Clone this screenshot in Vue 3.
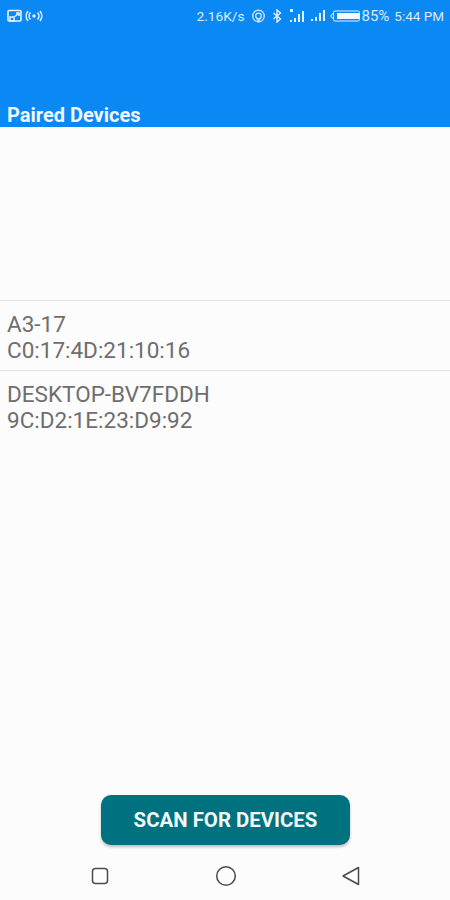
<script setup>
const devices = [
  { name: 'A3-17', mac: 'C0:17:4D:21:10:16' },
  { name: 'DESKTOP-BV7FDDH', mac: '9C:D2:1E:23:D9:92' },
]
</script>

<template>
  <div class="screen">
    <header class="appbar">
      <div class="status">
        <div class="status-left">
          <svg width="16" height="14" viewBox="0 0 16 14" fill="none" stroke="#e3f1ff" stroke-width="1.6">
            <rect x="1" y="1.5" width="13" height="10.5" rx="1"/>
            <path d="M9 4h3v3M12 4L8 7.5M3 8h4v4H3z"/>
          </svg>
          <svg width="18" height="14" viewBox="0 0 18 14" fill="none" stroke="#e3f1ff" stroke-width="1.6">
            <circle cx="9" cy="7" r="1.8" fill="#e3f1ff" stroke="none"/>
            <path d="M5.5 3.5a5 5 0 0 0 0 7M12.5 3.5a5 5 0 0 1 0 7M3 2a8 8 0 0 0 0 10M15 2a8 8 0 0 1 0 10"/>
          </svg>
        </div>
        <div class="status-right">
          <span class="speed">2.16K/s</span>
          <svg class="s-hot" width="15" height="14" viewBox="0 0 15 14" fill="none" stroke="#d5e9ff" stroke-width="1.3">
            <circle cx="7.5" cy="7" r="5.8"/>
            <circle cx="7.5" cy="7" r="2.8"/>
            <path d="M6 10l1.5 2.5L9 10"/>
          </svg>
          <svg class="s-bt" width="10" height="14" viewBox="0 0 10 14" fill="none" stroke="#e3f1ff" stroke-width="1.4">
            <path d="M1.5 4l7 6-3.5 3V1l3.5 3-7 6"/>
          </svg>
          <svg class="s-sig1" width="20" height="16" viewBox="0 0 20 16" fill="#e3f1ff">
            <rect x="2" y="1" width="3" height="3"/>
            <rect x="2" y="12" width="2" height="2"/>
            <rect x="6" y="10" width="2" height="4"/>
            <rect x="10" y="6" width="2" height="8"/>
            <rect x="14" y="3" width="2" height="11"/>
          </svg>
          <svg class="s-sig2" width="17" height="14" viewBox="0 0 17 14" fill="#e3f1ff">
            <rect x="1" y="10" width="2" height="2"/>
            <rect x="5" y="8" width="2" height="4"/>
            <rect x="9" y="4" width="2" height="8"/>
            <rect x="13" y="1" width="2" height="11"/>
          </svg>
          <svg class="s-bat" width="30" height="12" viewBox="0 0 30 12">
            <path d="M3 3.5L1 5v2l2 1.5" fill="none" stroke="#e3f1ff" stroke-width="1"/>
            <rect x="3.5" y="1" width="26" height="10" rx="1.5" fill="none" stroke="#e3f1ff" stroke-width="1"/>
            <rect x="7" y="3" width="22" height="6" fill="#f4f9ff"/>
          </svg>
          <span class="pct">85%</span>
          <span class="time">5:44 PM</span>
        </div>
      </div>
      <h1 class="title">Paired Devices</h1>
    </header>

    <main class="content">
      <ul class="list">
        <li v-for="d in devices" :key="d.mac" class="row">
          <div>{{ d.name }}</div>
          <div>{{ d.mac }}</div>
        </li>
      </ul>
    </main>

    <div class="action">
      <button class="scan" type="button">SCAN FOR DEVICES</button>
    </div>

    <nav class="navbar">
      <svg width="20" height="20" viewBox="0 0 20 20" fill="none" stroke="#4a4a4a" stroke-width="1.5">
        <rect x="2.5" y="2.5" width="15" height="15" rx="3"/>
      </svg>
      <svg width="22" height="22" viewBox="0 0 22 22" fill="none" stroke="#4a4a4a" stroke-width="1.5">
        <circle cx="11" cy="11" r="9.3"/>
      </svg>
      <svg width="20" height="20" viewBox="0 0 20 20" fill="none" stroke="#4a4a4a" stroke-width="1.5" stroke-linejoin="round">
        <path d="M17.5 1.5v17L2 10z"/>
      </svg>
    </nav>
  </div>
</template>

<style>
html, body { margin: 0; padding: 0; background: #fcfcfc; }
</style>

<style scoped>
.screen {
  width: 450px;
  height: 900px;
  display: flex;
  flex-direction: column;
  background: #fcfcfc;
  font-family: Roboto, "Liberation Sans", sans-serif;
  overflow: hidden;
}
.appbar {
  height: 127px;
  flex: none;
  background: #0a88f4;
  display: flex;
  flex-direction: column;
  justify-content: space-between;
  box-sizing: border-box;
  padding: 8px 6px 0 7px;
}
.status {
  display: flex;
  justify-content: space-between;
  align-items: center;
  height: 16px;
  color: #dcedff;
  font-size: 13.5px;
}
.status-left { display: flex; align-items: center; gap: 2px; }
.status-right { display: flex; align-items: center; }
.speed { margin-right: 7px; font-size: 13.7px; }
.s-hot { margin-right: 6px; }
.s-bt { margin-right: 6px; }
.s-sig1 { margin-right: 2px; }
.s-sig2 { margin-right: 3px; }
.pct { margin-left: 1px; margin-right: 5px; font-size: 15px; }
.title {
  margin: 0;
  font-size: 20px;
  line-height: 24px;
  font-weight: 700;
  color: #f0f7ff;
}
.content { flex: 1; padding-top: 173px; min-height: 0; }
.list { list-style: none; margin: 0; padding: 0; }
.row {
  border-top: 1px solid #e2e2e2;
  height: 59px;
  padding: 10px 7px 0;
  color: #6e6e6e;
  font-size: 22.5px;
  line-height: 26px;
}
.action { display: flex; justify-content: center; flex: none; padding: 0 0 20px 1px; }
.scan {
  width: 249px;
  height: 50px;
  border: none;
  border-radius: 10px;
  background: #00727f;
  color: #f2f8f9;
  font: 700 20.4px Roboto, "Liberation Sans", sans-serif;
  box-shadow: 0 2px 3px rgba(0, 0, 0, 0.25);
  padding: 0;
}
.navbar {
  flex: none;
  height: 35px;
  box-sizing: border-box;
  display: flex;
  align-items: center;
  padding: 0 89px 13px 90px;
  justify-content: space-between;
}
</style>
